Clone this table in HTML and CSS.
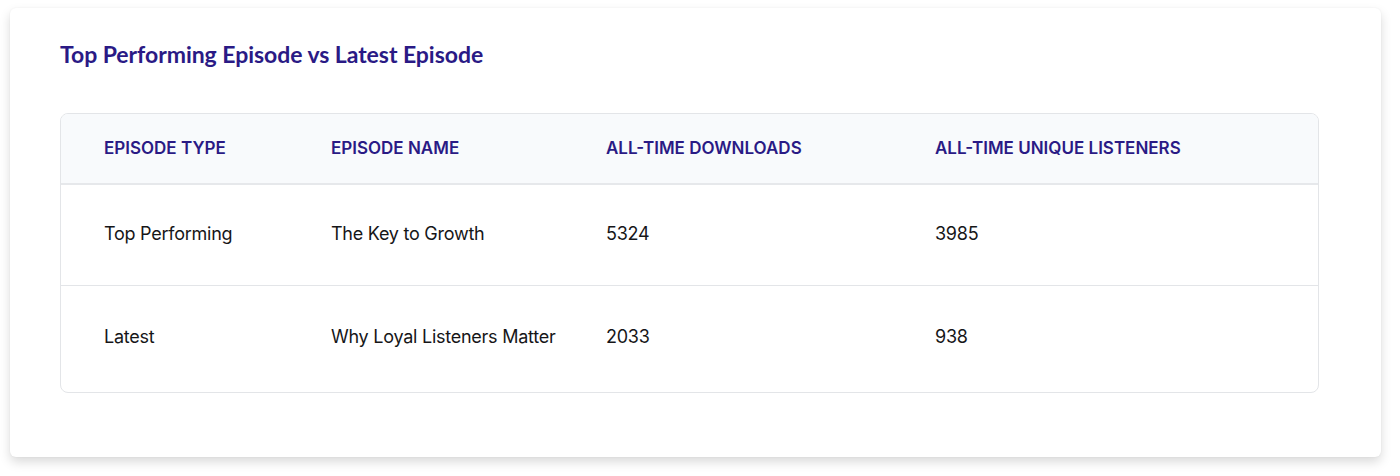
FILE: index.html
```html
<!DOCTYPE html>
<html>
<head>
<meta charset="utf-8">
<link rel="stylesheet" href="styles.css">
</head>
<body>
<div class="card">
  <h2 class="title">Top Performing Episode vs Latest Episode</h2>
  <div class="table">
    <div class="row head">
      <div class="cell">EPISODE TYPE</div>
      <div class="cell">EPISODE NAME</div>
      <div class="cell">ALL-TIME DOWNLOADS</div>
      <div class="cell">ALL-TIME UNIQUE LISTENERS</div>
    </div>
    <div class="row body first">
      <div class="cell">Top Performing</div>
      <div class="cell">The Key to Growth</div>
      <div class="cell">5324</div>
      <div class="cell">3985</div>
    </div>
    <div class="row body last">
      <div class="cell">Latest</div>
      <div class="cell">Why Loyal Listeners Matter</div>
      <div class="cell">2033</div>
      <div class="cell">938</div>
    </div>
  </div>
</div>
</body>
</html>
```

FILE: styles.css
```css
html, body {
  margin: 0;
  padding: 0;
  background: #ffffff;
}
body {
  padding: 8px 19px 19px 10px;
  width: 1371px;
  box-sizing: content-box;
}
.card {
  background: #ffffff;
  border-radius: 6px;
  box-shadow: 0 5px 11px rgba(0, 0, 0, 0.15), 0 0 2px rgba(0, 0, 0, 0.05);
  padding: 31px 62px 65px 50px;
  height: 449px;
  box-sizing: border-box;
}
.title {
  margin: 0;
  font-family: Lato, "Liberation Sans", sans-serif;
  font-weight: 700;
  font-size: 23px;
  line-height: 30px;
  color: #2a1a85;
  letter-spacing: -0.05px;
}
.table {
  margin-top: 44px;
  border: 1px solid #e3e5e8;
  border-radius: 8px;
  overflow: hidden;
}
.row {
  display: grid;
  grid-template-columns: 227px 275px 329px 1fr;
  align-items: center;
}
.cell {
  padding-left: 43px;
}
.head {
  background: #f8fafc;
  height: 69px;
  border-bottom: 2px solid #e6e8eb;
  font-family: Inter, "Noto Sans", sans-serif;
  font-weight: 600;
  font-size: 17px;
  color: #2a1a85;
  letter-spacing: 0;
}
.head .cell {
  padding-bottom: 2px;
}
.body {
  font-family: Inter, "Noto Sans", sans-serif;
  font-size: 18px;
  color: #161618;
  letter-spacing: -0.25px;
}
.body .cell {
  padding-bottom: 4px;
}
.first {
  height: 100px;
  border-bottom: 1px solid #e3e5e8;
}
.last {
  height: 106px;
}
.last .cell {
  padding-bottom: 6px;
}
```
